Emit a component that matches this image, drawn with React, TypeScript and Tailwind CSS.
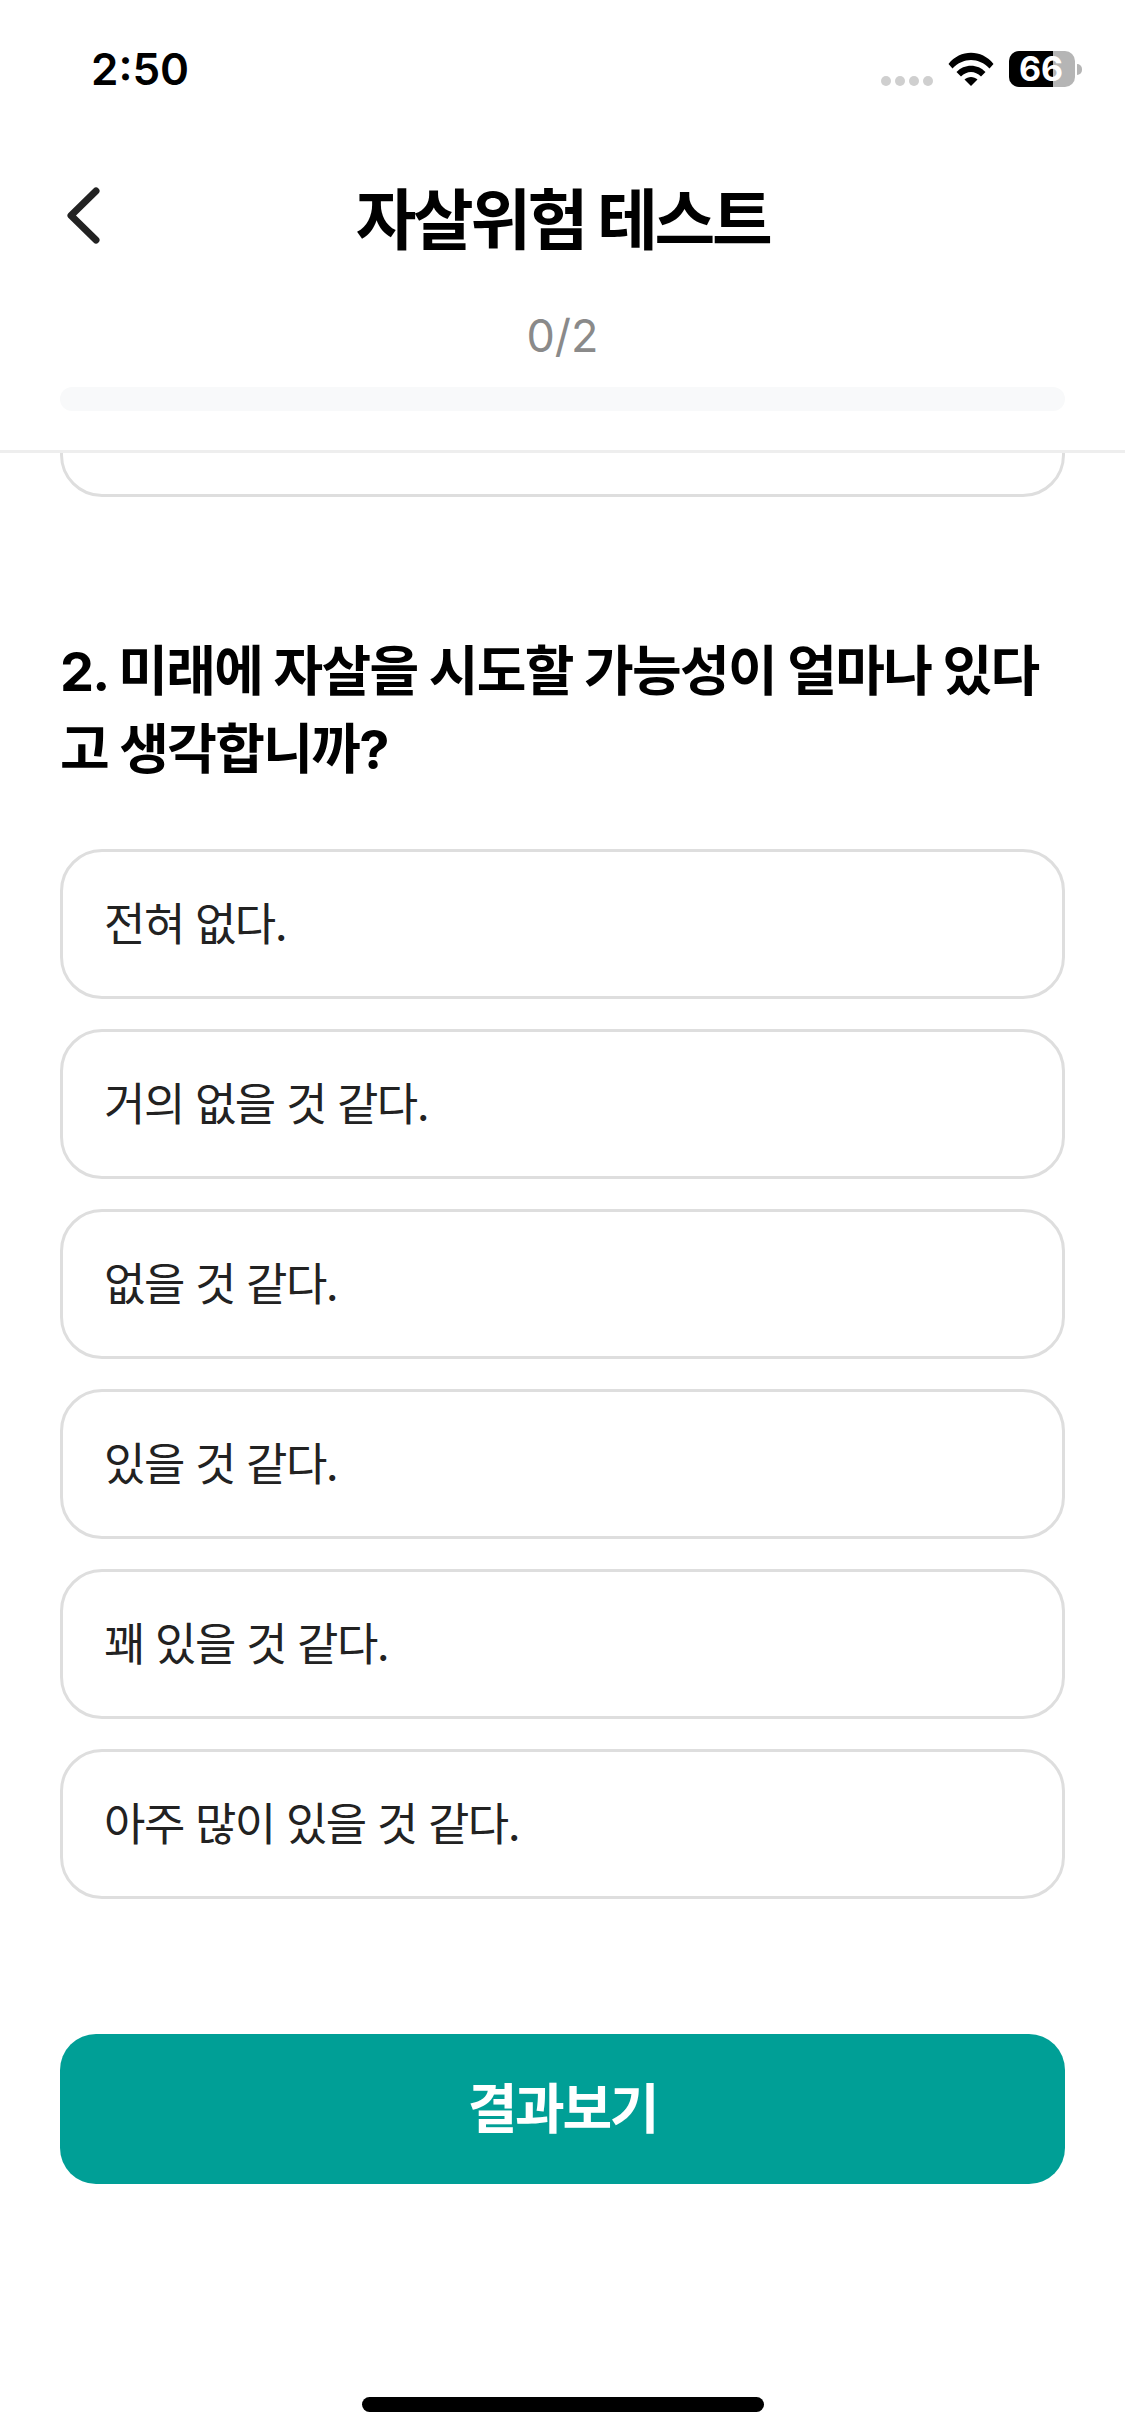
const options = ["전혀 없다.", "거의 없을 것 같다.", "없을 것 같다.", "있을 것 같다.", "꽤 있을 것 같다.", "아주 많이 있을 것 같다."];

function OptionCard({ label }: { label: string }) {
  return (
    <div className="flex h-[150px] items-center rounded-[42px] border-[3px] border-[#dedede] bg-white pt-[2px] pl-[41px] text-[45px] leading-[60px] tracking-[-1.5px] text-[#222222]">
      {label}
    </div>
  );
}

function StatusIcons() {
  return (
    <div className="flex items-center">
      <div className="mt-[24px] mr-[15px] flex gap-[4px]">
        <span className="h-[10px] w-[10px] rounded-full bg-[#cfcfcf]" />
        <span className="h-[10px] w-[10px] rounded-full bg-[#cfcfcf]" />
        <span className="h-[10px] w-[10px] rounded-full bg-[#cfcfcf]" />
        <span className="h-[10px] w-[10px] rounded-full bg-[#cfcfcf]" />
      </div>
      <svg width="46" height="34" viewBox="0 0 46 34" className="mr-[15px]">
        <path d="M0.5 12 C12 -3 34 -3 45.5 12 L41.5 16.5 C31 5 15 5 4.5 16.5 Z" fill="#000" />
        <path d="M8.5 20 C16 11.5 30 11.5 37.5 20 L33 24.5 C27 18.5 19 18.5 13 24.5 Z" fill="#000" />
        <path d="M16.5 27.5 C20 24 26 24 29.5 27.5 L23 34 Z" fill="#000" />
      </svg>
      <div className="relative flex h-[36px] w-[66px] items-center justify-center rounded-[10px] bg-[#b5b5b5]">
        <div className="absolute inset-y-0 left-0 w-[44px] rounded-l-[10px] bg-black" />
        <span className="relative ml-[-2px] text-[34px] leading-[36px] font-bold text-white">66</span>
      </div>
      <div className="ml-[2px] h-[11px] w-[5px] rounded-r-full bg-[#b5b5b5]" />
    </div>
  );
}

export default function App() {
  return (
    <div className="relative flex h-[2436px] w-[1125px] flex-col overflow-hidden bg-white font-['Inter','Noto_Sans_CJK_KR',sans-serif]">
      <header className="border-b-[3px] border-[#eeeeee] pb-[39px]">
        <div className="flex h-[138px] items-center justify-between pr-[43px] pl-[91px]">
          <span className="text-[44px] leading-[54px] font-semibold text-black">2:50</span>
          <StatusIcons />
        </div>
        <div className="grid h-[160px] grid-cols-[1fr_auto_1fr] items-center pl-[64px]">
          <svg width="40" height="64" viewBox="0 0 40 64" fill="none" className="-mt-[4px]">
            <path d="M32 7 L7 31.5 L32 56" stroke="#222222" strokeWidth="7" strokeLinecap="round" strokeLinejoin="round" />
          </svg>
          <h1 className="mt-[3px] mr-[64px] text-[66px] leading-[80px] font-bold tracking-[-3.4px] text-black">자살위험 테스트</h1>
          <div />
        </div>
        <div className="flex h-[76px] items-center justify-center text-[45px] leading-[54px] text-[#8a8a8a]">0/2</div>
        <div className="mx-[60px] mt-[13px] h-[24px] rounded-[12px] bg-[#f8f9fa]" />
      </header>
      <main className="flex-1 overflow-hidden px-[60px]">
        <div className="-mt-[106px] h-[150px] rounded-[42px] border-[3px] border-[#dedede] bg-white" />
        <h2 className="mt-[136px] mb-[60px] text-[54px] leading-[78px] font-bold tracking-[-1.65px] text-black">
          2. 미래에 자살을 시도할 가능성이 얼마나 있다고 생각합니까?
        </h2>
        <div className="flex flex-col gap-[30px]">
          {options.map((o) => (
            <OptionCard key={o} label={o} />
          ))}
        </div>
        <button className="mt-[135px] flex h-[150px] w-full items-center justify-center rounded-[36px] bg-[#009f96] text-[54px] font-bold tracking-[-2.3px] text-white">
          결과보기
        </button>
      </main>
      <div className="absolute bottom-[24px] left-[362px] h-[15px] w-[402px] rounded-full bg-black" />
    </div>
  );
}
